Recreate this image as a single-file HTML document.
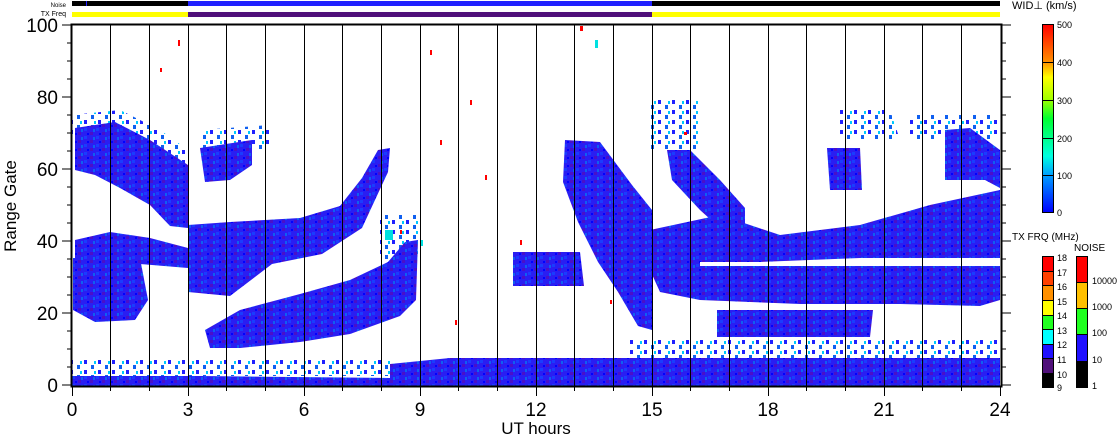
<!DOCTYPE html>
<html><head><meta charset="utf-8"><style>
html,body{margin:0;padding:0;background:#fff;}
svg{display:block;font-family:"Liberation Sans",sans-serif;}
</style></head><body>
<svg width="1118" height="435" viewBox="0 0 1118 435" xmlns="http://www.w3.org/2000/svg">
<defs>
<pattern id="tex" width="12" height="8" patternUnits="userSpaceOnUse">
<rect width="12" height="8" fill="#2a1ef2"/>
<rect x="0" y="0" width="3" height="3" fill="#1a3cff"/>
<rect x="6" y="4" width="3" height="3" fill="#4a10c8"/>
<rect x="9" y="1" width="2" height="3" fill="#1060f0"/>
<rect x="3" y="5" width="2" height="2" fill="#0000ff"/>
</pattern>
<pattern id="spk" width="14" height="10" patternUnits="userSpaceOnUse">
<rect x="0" y="0" width="3" height="4" fill="#2020ff"/>
<rect x="7" y="5" width="3" height="4" fill="#1060f0"/>
<rect x="10" y="1" width="2" height="3" fill="#00c8ff"/>
</pattern>
</defs>
<!-- top bars -->
<rect x="72" y="1" width="928" height="5" fill="#000"/>
<rect x="188" y="1" width="464" height="5" fill="#2020ff"/>
<rect x="86" y="1" width="1" height="5" fill="#2020ff"/>
<rect x="72" y="12" width="116" height="5" fill="#ffff00"/>
<rect x="188" y="12" width="464" height="5" fill="#50107a"/>
<rect x="652" y="12" width="348" height="5" fill="#ffff00"/>
<text x="66" y="7" font-size="6" text-anchor="end">Noise</text>
<text x="66" y="16" font-size="7" text-anchor="end">TX Freq</text>

<!-- sparse speckle regions -->
<g fill="url(#spk)">
<polygon points="72,360 390,360 390,376 72,376"/>
<polygon points="72,115 120,110 160,130 188,150 188,170 150,150 110,128 72,140"/>
<polygon points="630,340 1000,340 1000,358 630,358"/>
<polygon points="840,110 890,110 900,140 840,140"/>
<polygon points="650,100 700,100 700,150 650,150"/>
<polygon points="910,115 1000,115 1000,140 910,140"/>
<polygon points="380,215 420,215 420,260 380,260"/>
<polygon points="200,130 270,125 270,150 200,150"/>
</g>
<!-- data -->
<g fill="url(#tex)">
<polygon points="75,128 115,122 150,140 188,165 188,228 170,226 150,205 120,188 95,175 75,170"/>
<polygon points="75,240 110,232 150,238 188,248 188,268 140,264 100,262 75,262"/>
<polygon points="73,258 140,258 148,300 135,320 95,322 73,310"/>
<polygon points="188,225 230,222 300,218 340,206 362,178 378,150 390,148 388,172 362,228 322,254 272,264 230,296 188,292"/>
<polygon points="205,330 240,310 300,294 350,280 388,262 405,242 418,240 416,300 400,316 350,334 300,342 240,348 210,348"/>
<polygon points="200,148 252,140 252,165 230,180 205,182"/>
<polygon points="513,252 580,252 584,286 513,286"/>
<polygon points="565,140 600,142 632,185 652,210 652,330 638,326 618,292 598,262 578,222 563,182"/>
<polygon points="667,150 690,150 720,180 745,208 745,228 720,228 700,210 672,180"/>
<polygon points="650,230 720,215 780,235 860,225 930,205 1000,190 1000,258 860,258 760,262 700,262 700,266 860,266 1000,266 1000,300 980,306 900,304 800,304 700,300 660,292 650,270"/>
<polygon points="717,310 873,310 870,337 717,337"/>
<polygon points="945,130 970,128 1000,150 1000,188 985,180 945,180"/>
<polygon points="827,148 860,148 862,190 830,190"/>
<polygon points="390,364 450,358 1000,358 1000,387 390,387"/>
<polygon points="72,376 200,376 390,378 390,387 72,387"/>
</g>
<g fill="#ff0000">
<rect x="178" y="40" width="2" height="6"/><rect x="430" y="50" width="2" height="5"/><rect x="470" y="100" width="2" height="5"/>
<rect x="520" y="240" width="2" height="5"/><rect x="580" y="26" width="3" height="5"/><rect x="684" y="132" width="3" height="3"/>
<rect x="400" y="230" width="2" height="4"/><rect x="610" y="300" width="2" height="4"/><rect x="160" y="68" width="2" height="4"/>
<rect x="440" y="140" width="2" height="5"/><rect x="485" y="175" width="2" height="5"/><rect x="455" y="320" width="2" height="5"/>
</g>
<g fill="#00e0e0">
<rect x="420" y="240" width="3" height="6"/><rect x="385" y="230" width="8" height="10"/><rect x="595" y="40" width="3" height="8"/>
</g>

<!-- grid -->
<g stroke="#000" stroke-width="1">
<path d="M110.5 24V387M149.5 24V387M188.5 24V387M226.5 24V387M265.5 24V387M304.5 24V387M342.5 24V387M381.5 24V387M420.5 24V387M458.5 24V387M497.5 24V387M536.5 24V387M574.5 24V387M613.5 24V387M652.5 24V387M690.5 24V387M729.5 24V387M768.5 24V387M806.5 24V387M845.5 24V387M884.5 24V387M922.5 24V387M961.5 24V387"/>
<rect x="71.5" y="24.5" width="930" height="362" fill="none" stroke-width="2"/>
<path d="M62 25H72M62 97H72M62 169H72M62 241H72M62 313H72M62 385H72
M67 43H72M67 61H72M67 79H72M67 115H72M67 133H72M67 151H72M67 187H72M67 205H72M67 223H72M67 259H72M67 277H72M67 295H72M67 331H72M67 349H72M67 367H72
M1001 25H1011M1001 97H1011M1001 169H1011M1001 241H1011M1001 313H1011M1001 385H1011
M1001 43H1006M1001 61H1006M1001 79H1006M1001 115H1006M1001 133H1006M1001 151H1006M1001 187H1006M1001 205H1006M1001 223H1006M1001 259H1006M1001 277H1006M1001 295H1006M1001 331H1006M1001 349H1006M1001 367H1006
M72.5 387V396M188.5 387V396M304.5 387V396M420.5 387V396M536.5 387V396M652.5 387V396M768.5 387V396M884.5 387V396M1000.5 387V396
M110.5 387V391M149.5 387V391M226.5 387V391M265.5 387V391M342.5 387V391M381.5 387V391M458.5 387V391M497.5 387V391M574.5 387V391M613.5 387V391M690.5 387V391M729.5 387V391M806.5 387V391M845.5 387V391M922.5 387V391M961.5 387V391"/>
</g>
<g font-size="19" fill="#000" text-anchor="end">
<text x="58" y="32">100</text><text x="58" y="104">80</text><text x="58" y="176">60</text><text x="58" y="248">40</text><text x="58" y="320">20</text><text x="58" y="392">0</text>
</g>
<g font-size="19" fill="#000" text-anchor="middle">
<text x="72" y="416">0</text><text x="188" y="416">3</text><text x="304" y="416">6</text><text x="420" y="416">9</text><text x="536" y="416">12</text><text x="652" y="416">15</text><text x="768" y="416">18</text><text x="884" y="416">21</text><text x="1000" y="416">24</text>
<text x="536" y="434" font-size="17">UT hours</text>
</g>
<text transform="translate(16,206) rotate(-90)" font-size="17" text-anchor="middle">Range Gate</text>

<!-- colorbars -->
<defs><linearGradient id="wg" x1="0" y1="1" x2="0" y2="0">
<stop offset="0" stop-color="#0000ff"/><stop offset="0.2" stop-color="#00a0ff"/><stop offset="0.3" stop-color="#00ffe0"/><stop offset="0.5" stop-color="#00ff30"/><stop offset="0.6" stop-color="#a0ff00"/><stop offset="0.72" stop-color="#ffff00"/><stop offset="0.8" stop-color="#ff9000"/><stop offset="1" stop-color="#ff0000"/>
</linearGradient></defs>
<text x="1012" y="9" font-size="11">WID⊥ (km/s)</text>
<rect x="1042.5" y="24.5" width="11" height="188" fill="url(#wg)" stroke="#000"/>
<path d="M1043 62.5H1053M1043 100.5H1053M1043 138.5H1053M1043 175.5H1053" stroke="#000"/>
<g font-size="9" fill="#000"><text x="1057" y="28">500</text><text x="1057" y="66">400</text><text x="1057" y="104">300</text><text x="1057" y="142">200</text><text x="1057" y="179">100</text><text x="1057" y="216">0</text></g>

<text x="1012" y="240" font-size="10">TX FRQ (MHz)</text>
<text x="1074" y="251" font-size="10">NOISE</text>
<g stroke="#000">
<rect x="1042.5" y="256.5" width="11" height="15" fill="#ff0000"/>
<rect x="1042.5" y="271.5" width="11" height="14" fill="#ff4000"/>
<rect x="1042.5" y="285.5" width="11" height="15" fill="#ff9000"/>
<rect x="1042.5" y="300.5" width="11" height="15" fill="#ffff00"/>
<rect x="1042.5" y="315.5" width="11" height="14" fill="#20ff20"/>
<rect x="1042.5" y="329.5" width="11" height="15" fill="#00ffff"/>
<rect x="1042.5" y="344.5" width="11" height="14" fill="#2010ff"/>
<rect x="1042.5" y="358.5" width="11" height="15" fill="#50107a"/>
<rect x="1042.5" y="373.5" width="11" height="14" fill="#000"/>
<rect x="1076.5" y="256.5" width="11" height="26" fill="#ff0000"/>
<rect x="1076.5" y="282.5" width="11" height="26" fill="#ffc000"/>
<rect x="1076.5" y="308.5" width="11" height="26" fill="#20ff20"/>
<rect x="1076.5" y="334.5" width="11" height="27" fill="#2010ff"/>
<rect x="1076.5" y="361.5" width="11" height="26" fill="#000"/>
</g>
<g font-size="9" fill="#000">
<text x="1057" y="261">18</text><text x="1057" y="276">17</text><text x="1057" y="290">16</text><text x="1057" y="305">15</text><text x="1057" y="319">14</text><text x="1057" y="334">13</text><text x="1057" y="348">12</text><text x="1057" y="363">11</text><text x="1057" y="378">10</text><text x="1057" y="391">9</text>
<text x="1092" y="284">10000</text><text x="1092" y="310">1000</text><text x="1092" y="336">100</text><text x="1092" y="363">10</text><text x="1092" y="389">1</text>
</g>
</svg>
</body></html>
